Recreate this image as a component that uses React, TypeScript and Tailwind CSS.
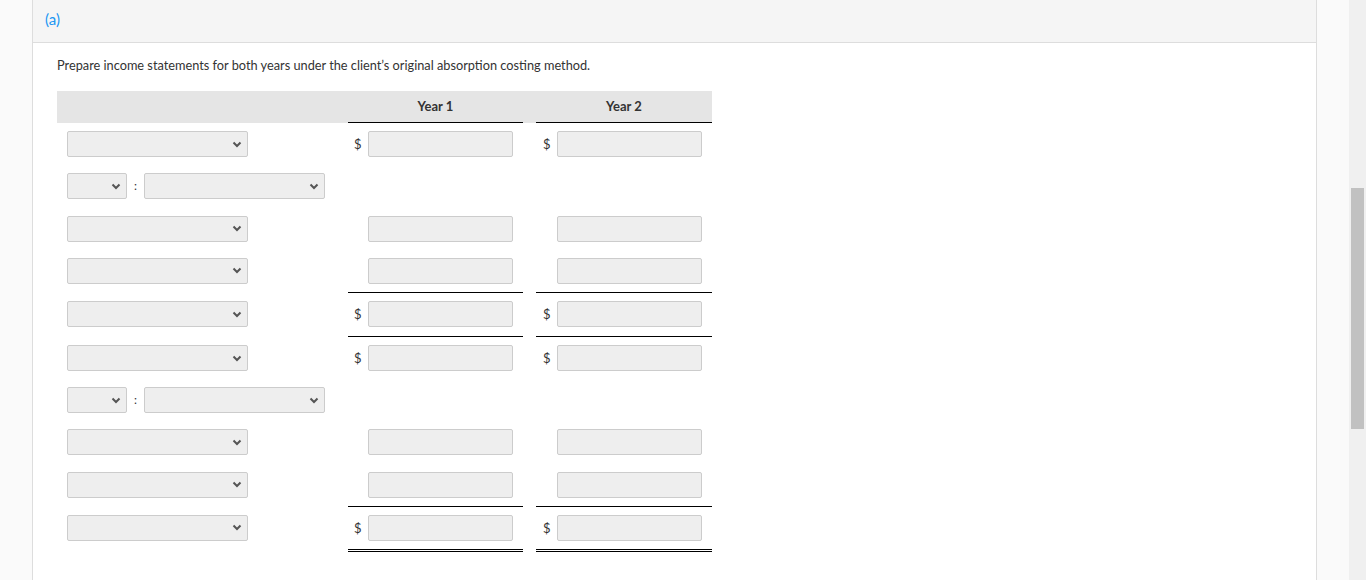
const font = { fontFamily: 'Lato, "Open Sans", sans-serif' }

type Row = {
  kind: 'single' | 'split'
  h: string
  y1?: boolean
  dollar?: boolean
  top?: boolean
  bottom?: boolean
}

const rows: Row[] = [
  { kind: 'single', h: 'h-[42.25px]', y1: true, dollar: true },
  { kind: 'split', h: 'h-[42.25px]' },
  { kind: 'single', h: 'h-[42.25px]', y1: true },
  { kind: 'single', h: 'h-[42.25px]', y1: true },
  { kind: 'single', h: 'h-[44px]', y1: true, dollar: true, top: true },
  { kind: 'single', h: 'h-[43px]', y1: true, dollar: true, top: true },
  { kind: 'split', h: 'h-[42.33px]' },
  { kind: 'single', h: 'h-[42.33px]', y1: true },
  { kind: 'single', h: 'h-[42.33px]', y1: true },
  { kind: 'single', h: 'h-[46px]', y1: true, dollar: true, top: true, bottom: true },
]

function Chevron() {
  return (
    <svg width="10" height="7" viewBox="0 0 10 7" className="shrink-0">
      <path d="M1.5 1.5 L5 5 L8.5 1.5" fill="none" stroke="#555" strokeWidth="2" />
    </svg>
  )
}

function Select({ width }: { width: string }) {
  return (
    <div
      className={`${width} h-[26px] bg-[#eeeeee] border border-[#cccccc] rounded-[2px] flex items-center justify-end pr-[5px]`}
    >
      <Chevron />
    </div>
  )
}

function AmountCell({ row, wide }: { row: Row; wide: boolean }) {
  const borders = `${row.top ? 'border-t border-black pt-[8px]' : 'pt-[8px]'} ${
    row.bottom ? 'border-b-[3px] border-double border-b-black' : ''
  }`
  return (
    <div className={`${wide ? 'w-[176px] pl-[7px]' : 'w-[175px] pl-[6px]'} h-full flex items-start ${borders}`}>
      {row.y1 && (
        <>
          <span className="w-[14px] h-[26px] leading-[26px] text-[13px] text-[#333] text-left">
            {row.dollar ? '$' : ''}
          </span>
          <div className="w-[145px] h-[26px] bg-[#eeeeee] border border-[#cccccc] rounded-[2px]" />
        </>
      )}
    </div>
  )
}

export default function App() {
  return (
    <div className="h-[580px] w-[1366px] overflow-hidden flex bg-[#fafafa]" style={font}>
      <div className="w-[32px] shrink-0" />
      <div className="w-[1285px] shrink-0 bg-white border-x border-[#dddddd] flex flex-col">
        <div className="h-[43px] shrink-0 bg-[#f5f5f5] border-b border-[#dddddd] pl-[12px] pt-[7px]">
          <span className="text-[15px] text-[#2196f3] leading-[20px]">(a)</span>
        </div>
        <div className="pl-[24px]">
          <p className="text-[12.75px] text-[#333] leading-[18px] mt-[13px]">
            Prepare income statements for both years under the client’s original absorption costing method.
          </p>

          <div className="w-[655px] mt-[17px]">
            <div className="h-[32px] flex bg-[#e5e5e5]">
              <div className="w-[291px]" />
              <div className="w-[175px] border-b border-black flex items-center justify-center text-[13px] font-bold text-[#333]">
                Year 1
              </div>
              <div className="w-[13px]" />
              <div className="w-[176px] border-b border-black flex items-center justify-center text-[13px] font-bold text-[#333]">
                Year 2
              </div>
            </div>

            {rows.map((row, i) => (
              <div key={i} className={`flex ${row.h}`}>
                <div className={`w-[291px] h-full flex items-start pl-[10px] ${row.top ? 'pt-[9px]' : 'pt-[8px]'}`}>
                  {row.kind === 'single' ? (
                    <Select width="w-[181px]" />
                  ) : (
                    <div className="flex items-center">
                      <Select width="w-[60px]" />
                      <span className="w-[17px] text-center text-[12px] text-[#333]">:</span>
                      <Select width="w-[181px]" />
                    </div>
                  )}
                </div>
                <AmountCell row={row} wide={false} />
                <div className="w-[13px]" />
                <AmountCell row={row} wide />
              </div>
            ))}
          </div>
        </div>
      </div>
      <div className="w-[32px] shrink-0" />
      <div className="w-[17px] shrink-0 bg-[#f0f0f0] pt-[188px] pl-[2px]">
        <div className="w-[13px] h-[241px] bg-[#c1c1c1]" />
      </div>
    </div>
  )
}
